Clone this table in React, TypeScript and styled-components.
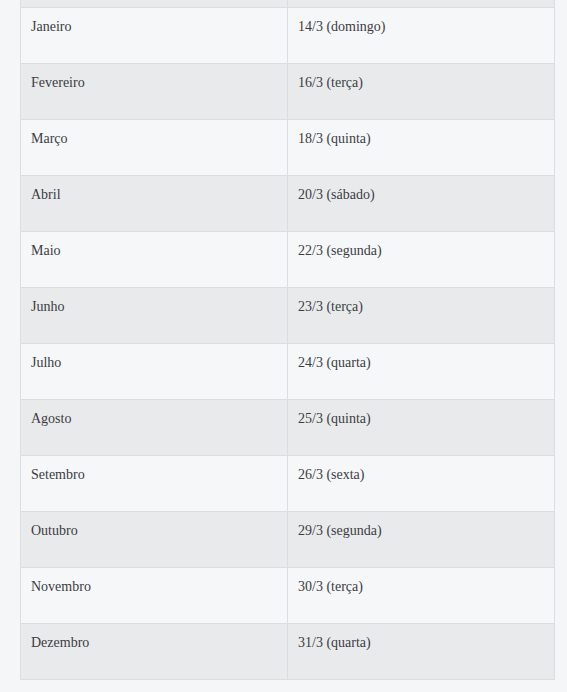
import React from 'react'
import styled, { createGlobalStyle } from 'styled-components'

type Row = { mes: string, data: string }

const rows: Row[] = [
  { mes: 'Janeiro', data: '14/3 (domingo)' },
  { mes: 'Fevereiro', data: '16/3 (terça)' },
  { mes: 'Março', data: '18/3 (quinta)' },
  { mes: 'Abril', data: '20/3 (sábado)' },
  { mes: 'Maio', data: '22/3 (segunda)' },
  { mes: 'Junho', data: '23/3 (terça)' },
  { mes: 'Julho', data: '24/3 (quarta)' },
  { mes: 'Agosto', data: '25/3 (quinta)' },
  { mes: 'Setembro', data: '26/3 (sexta)' },
  { mes: 'Outubro', data: '29/3 (segunda)' },
  { mes: 'Novembro', data: '30/3 (terça)' },
  { mes: 'Dezembro', data: '31/3 (quarta)' },
]

const GlobalStyle = createGlobalStyle`
  body {
    margin: 0;
    background: #f5f6f8;
    font-family: "Liberation Serif", "DejaVu Serif", serif;
  }
`

const App: React.FC = () => {
  return (
    <Page>
      <GlobalStyle />
      <Table>
        <tbody>
          {/* 上にスクロールした前の行の端 */}
          <StubRow>
            <StubCell />
            <StubCell />
          </StubRow>
          {rows.map((r, i) => (
            <BodyRow key={r.mes} $striped={i % 2 === 1}>
              <Cell>{r.mes}</Cell>
              <Cell>{r.data}</Cell>
            </BodyRow>
          ))}
        </tbody>
      </Table>
    </Page>
  )
}

const Page = styled.div`
  padding: 0 12px 12px 20px;
`

const Table = styled.table`
  width: 535px;
  border-collapse: collapse;
  table-layout: fixed;
  color: #3b3d42;
  font-family: "Liberation Serif", "DejaVu Serif", serif;
  font-size: 14px;
`

const StubRow = styled.tr`
  background: #e9eaec;
`

const StubCell = styled.td`
  height: 7px;
  padding: 0;
  border: 1px solid #dcdde0;
  border-top: none;
`

const BodyRow = styled.tr<{ $striped: boolean }>`
  background: ${p => (p.$striped ? '#e9eaec' : '#f6f7f9')};
`

const Cell = styled.td`
  height: 56px;
  box-sizing: border-box;
  border: 1px solid #dcdde0;
  padding: 9px 10px 0;
  vertical-align: top;
  line-height: 20px;
`

export default App
